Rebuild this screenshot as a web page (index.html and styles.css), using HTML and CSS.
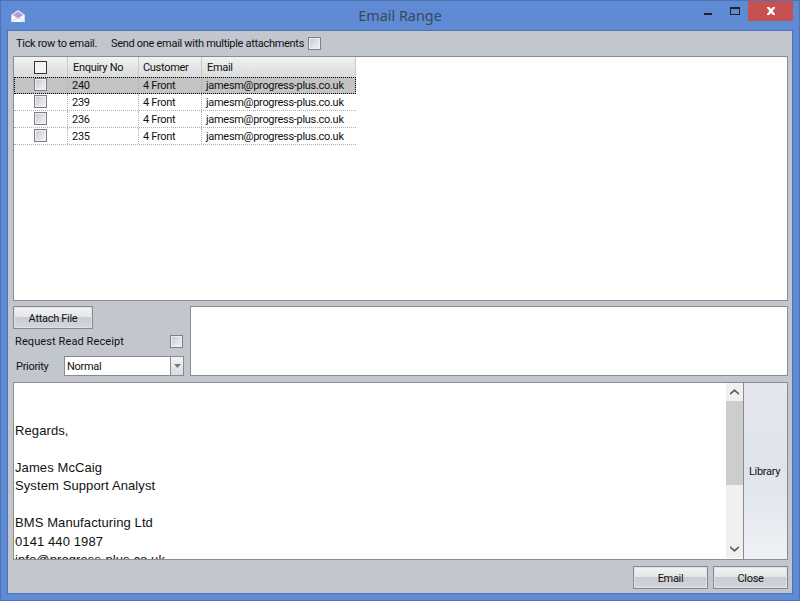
FILE: index.html
```html
<!DOCTYPE html>
<html lang="en">
<head>
<meta charset="utf-8">
<title>Email Range</title>
<link rel="stylesheet" href="styles.css">
</head>
<body>
<div class="window">
  <header class="titlebar">
    <svg class="app-icon" width="16" height="14" viewBox="0 0 16 14">
      <path d="M1.5 5.5 8 1l6.500 4.500V13h-13z" fill="#e9e6f5"/>
      <path d="M3 6 8 2.500 13 6 8 9.500z" fill="#b59ad8"/>
      <path d="M1.500 6 8 10l6.500-4v7h-13z" fill="#f7fafd"/>
      <path d="M1.500 13 8 8.500l6.500 4.500" fill="none" stroke="#c5d5ea" stroke-width="1"/>
    </svg>
    <span class="title">Email Range</span>
    <div class="controls">
      <span class="ctl-min"></span>
      <span class="ctl-max"></span>
      <span class="ctl-close">
        <svg width="10" height="8" viewBox="0 0 10 8"><path d="M1 0h2l2 2 2-2h2v1L6.500 4 9 7v1H7L5 6 3 8H1V7l2.500-3L1 1z" fill="#fff"/></svg>
      </span>
    </div>
  </header>
  <main class="client">
    <div class="topline">
      <span>Tick row to email.</span>
      <span class="multi">Send one email with multiple attachments</span>
      <span class="check"></span>
    </div>
    <section class="gridbox">
      <div class="row head">
        <div class="cell c0"><span class="check hcheck"></span></div>
        <div class="cell c1">Enquiry No</div>
        <div class="cell c2">Customer</div>
        <div class="cell c3">Email</div>
      </div>
      <div class="row selected">
        <div class="cell c0"><span class="check"></span></div>
        <div class="cell c1">240</div>
        <div class="cell c2">4 Front</div>
        <div class="cell c3">jamesm@progress-plus.co.uk</div>
      </div>
      <div class="row">
        <div class="cell c0"><span class="check"></span></div>
        <div class="cell c1">239</div>
        <div class="cell c2">4 Front</div>
        <div class="cell c3">jamesm@progress-plus.co.uk</div>
      </div>
      <div class="row">
        <div class="cell c0"><span class="check"></span></div>
        <div class="cell c1">236</div>
        <div class="cell c2">4 Front</div>
        <div class="cell c3">jamesm@progress-plus.co.uk</div>
      </div>
      <div class="row">
        <div class="cell c0"><span class="check"></span></div>
        <div class="cell c1">235</div>
        <div class="cell c2">4 Front</div>
        <div class="cell c3">jamesm@progress-plus.co.uk</div>
      </div>
    </section>
    <section class="options">
      <div class="optcol">
        <button class="btn attach">Attach File</button>
        <div class="receipt"><span>Request Read Receipt</span><span class="check"></span></div>
        <div class="priority">
          <span class="plabel">Priority</span>
          <div class="combo">
            <span class="combo-val">Normal</span>
            <span class="combo-btn"><svg width="7" height="4" viewBox="0 0 7 4"><path d="M0 0h7L3.500 4z" fill="#777"/></svg></span>
          </div>
        </div>
      </div>
      <div class="attachbox"></div>
    </section>
    <section class="message">
      <div class="msgtext">
        <p>&nbsp;</p>
        <p>&nbsp;</p>
        <p>Regards,</p>
        <p>&nbsp;</p>
        <p>James McCaig</p>
        <p>System Support Analyst</p>
        <p>&nbsp;</p>
        <p>BMS Manufacturing Ltd</p>
        <p>0141 440 1987</p>
        <p>info@progress-plus.co.uk</p>
      </div>
      <div class="scrollbar">
        <span class="arrow"><svg width="9" height="6" viewBox="0 0 9 6"><path d="M0 4 4.500 0 9 4v2L4.500 2.500 0 6z" fill="#606060"/></svg></span>
        <span class="thumb"></span>
        <span class="track"></span>
        <span class="arrow"><svg width="9" height="6" viewBox="0 0 9 6"><path d="M0 0 4.500 3.500 9 0v2L4.500 6 0 2z" fill="#606060"/></svg></span>
      </div>
      <button class="library">Library</button>
    </section>
    <footer class="actions">
      <button class="btn action">Email</button>
      <button class="btn action">Close</button>
    </footer>
  </main>
</div>
</body>
</html>
```
FILE: styles.css
```css
* { box-sizing: border-box; }
html, body { margin: 0; padding: 0; }
body {
  width: 800px;
  height: 601px;
  overflow: hidden;
  font-family: "Roboto", "Liberation Sans", Arial, sans-serif;
  font-size: 11px;
  letter-spacing: -0.3px;
  color: #111;
}
.window {
  width: 800px;
  height: 601px;
  background: #5e8bd3;
  border: 1px solid #4f74b4;
  display: flex;
  flex-direction: column;
  padding: 0 6px 6px;
}
.titlebar {
  height: 29px;
  flex: none;
  position: relative;
  display: flex;
  align-items: flex-start;
  justify-content: center;
}
.app-icon { position: absolute; left: 3px; top: 8px; }
.title {
  font-family: "Noto Sans", "Open Sans", sans-serif;
  font-size: 14.400px;
  letter-spacing: 0;
  line-height: 29px;
  color: #37475f;
}
.controls {
  position: absolute;
  right: 0;
  top: 0;
  display: flex;
  align-items: flex-start;
}
.ctl-min {
  width: 8px;
  height: 2px;
  background: #222;
  margin-top: 12px;
  margin-right: 18px;
}
.ctl-max {
  width: 10px;
  height: 8px;
  border: 1px solid #222;
  border-top-width: 2px;
  margin-top: 6px;
  margin-right: 8px;
}
.ctl-close {
  width: 45px;
  height: 20px;
  background: #c75050;
  display: flex;
  align-items: center;
  justify-content: center;
}
.client {
  flex: 1;
  background: #c2c6ce;
  border: 1px solid #4f74b4;
  padding: 0 4px 3px 5px;
  display: flex;
  flex-direction: column;
}
.topline {
  height: 25px;
  flex: none;
  display: flex;
  align-items: center;
  padding-left: 3px;
}
.multi { margin-left: 14px; margin-right: 4px; }
.check {
  display: block;
  width: 13px;
  height: 13px;
  border: 1px solid #7f7f7f;
  background: linear-gradient(135deg, #c4c8d3 0%, #e2e4e9 60%, #f6f6f8 100%);
  box-shadow: inset 0 0 0 1px #eeeff1;
}
.gridbox {
  height: 245px;
  flex: none;
  background: #fff;
  border: 1px solid #8c8c8c;
}
.row {
  display: flex;
  width: 342px;
  height: 17px;
  border-bottom: 1px dotted #b0b0b0;
  line-height: 17px;
}
.row.head {
  height: 20px;
  line-height: 21px;
  border-bottom: 0;
  background: linear-gradient(#f1f2f2, #d9dbdc);
}
.row.selected {
  background: #c3c3c3;
  outline: 1px dotted #000;
  outline-offset: -1px;
}
.cell {
  border-right: 1px dotted #b0b0b0;
  padding-left: 4px;
  white-space: nowrap;
}
.head .cell { border-right: 1px solid #c6c8ca; }
.head .c1, .head .c3 { padding-left: 5px; }
.c0 {
  width: 54px;
  padding-left: 20px;
  padding-top: 1px;
}
.head .c0 { padding-top: 4px; }
.hcheck {
  border-color: #333;
  background: #f3f3f3;
  box-shadow: none;
}
.c1 { width: 71px; }
.c2 { width: 63px; }
.c3 { width: 154px; border-right: 0; }
.options {
  height: 70px;
  flex: none;
  margin-top: 5px;
  display: flex;
  gap: 6px;
}
.optcol {
  width: 171px;
  flex: none;
  display: flex;
  flex-direction: column;
}
.btn {
  font: inherit;
  letter-spacing: inherit;
  color: #111;
  height: 23px;
  padding: 1px 0 0;
  border: 1px solid #8a8a8a;
  background: linear-gradient(#f3f3f4 0%, #e6e7ea 45%, #c9ccd2 50%, #d3d6db 100%);
  box-shadow: inset 0 0 0 1px #dfe1e5;
}
.attach { width: 80px; flex: none; }
.receipt {
  display: flex;
  justify-content: space-between;
  align-items: center;
  height: 22px;
  margin-top: 1px;
  padding: 0 1px 0 2px;
  letter-spacing: 0.1px;
}
.priority {
  display: flex;
  align-items: center;
  margin-top: 4px;
  height: 20px;
}
.plabel { width: 51px; padding-left: 3px; flex: none; }
.combo {
  width: 120px;
  height: 20px;
  display: flex;
  background: #fff;
  border: 1px solid #8a8a8a;
}
.combo-val { flex: 1; line-height: 19px; padding-left: 2px; }
.combo-btn {
  width: 13px;
  flex: none;
  border-left: 1px solid #8a8a8a;
  background: linear-gradient(#f3f3f5, #d9dce2);
  display: flex;
  align-items: center;
  justify-content: center;
}
.attachbox {
  flex: 1;
  background: #fff;
  border: 1px solid #8c8c8c;
}
.message {
  height: 178px;
  flex: none;
  margin-top: 6px;
  display: flex;
  background: #fff;
  border: 1px solid #8c8c8c;
}
.msgtext {
  flex: 1;
  overflow: hidden;
  padding: 2px 0 0 1px;
  font-family: "Liberation Sans", Arial, sans-serif;
  font-size: 13px;
  line-height: 18.430px;
  letter-spacing: 0.1px;
}
.msgtext p { margin: 0; white-space: nowrap; }
.scrollbar {
  width: 17px;
  flex: none;
  background: #f0f0f0;
  display: flex;
  flex-direction: column;
  margin-bottom: 1px;
}
.arrow {
  height: 18px;
  flex: none;
  display: flex;
  align-items: center;
  justify-content: center;
}
.thumb { height: 84px; flex: none; background: #cdcdcd; }
.track { flex: 1; }
.library {
  width: 44px;
  flex: none;
  padding: 0 2px 0 0;
  font: inherit;
  letter-spacing: inherit;
  color: #111;
  border: 0;
  border-left: 1px solid #8c8c8c;
  background: linear-gradient(#e4e7ec, #dfe4ec 50%, #eef1f5);
}
.actions {
  flex: 1;
  display: flex;
  justify-content: flex-end;
  gap: 5px;
  padding-top: 6px;
}
.action { width: 75px; }
```
